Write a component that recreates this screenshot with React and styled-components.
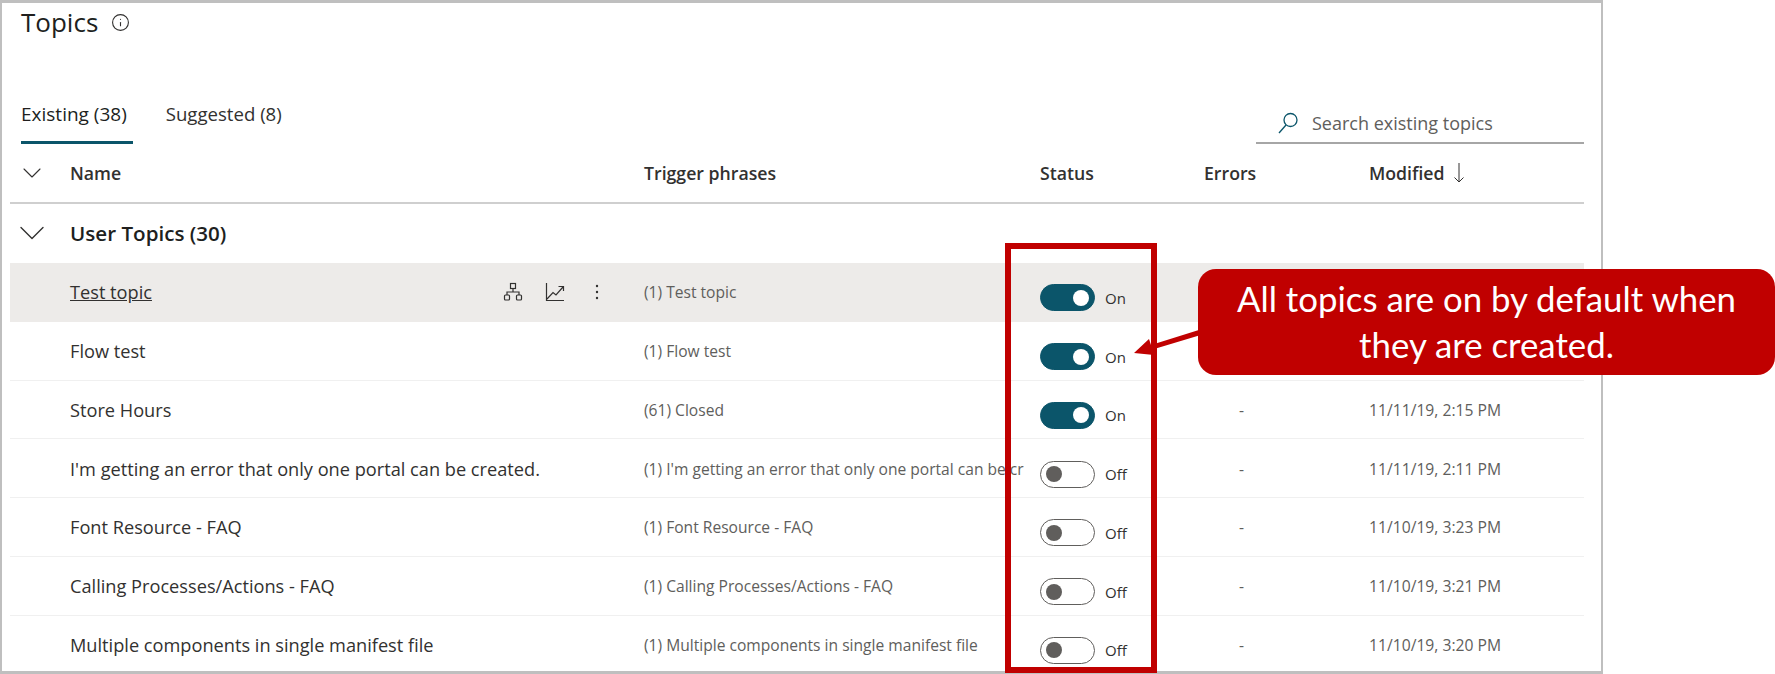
import React from "react";
import styled, { createGlobalStyle } from "styled-components";
import { ChevronDown, Info } from "lucide-react";

const rows = [
  { name: "Test topic", phrase: "(1) Test topic", on: true, hovered: true },
  { name: "Flow test", phrase: "(1) Flow test", on: true },
  { name: "Store Hours", phrase: "(61) Closed", on: true, errors: "-", modified: "11/11/19, 2:15 PM" },
  {
    name: "I'm getting an error that only one portal can be created.",
    phrase: "(1) I'm getting an error that only one portal can be created.",
    on: false,
    errors: "-",
    modified: "11/11/19, 2:11 PM"
  },
  { name: "Font Resource - FAQ", phrase: "(1) Font Resource - FAQ", on: false, errors: "-", modified: "11/10/19, 3:23 PM" },
  {
    name: "Calling Processes/Actions - FAQ",
    phrase: "(1) Calling Processes/Actions - FAQ",
    on: false,
    errors: "-",
    modified: "11/10/19, 3:21 PM"
  },
  {
    name: "Multiple components in single manifest file",
    phrase: "(1) Multiple components in single manifest file",
    on: false,
    errors: "-",
    modified: "11/10/19, 3:20 PM"
  }
];

const App = () => (
  <Page>
    <GlobalStyle />
    <Frame>
      <TitleRow>
        <Title>Topics</Title>
        <Info size={19} strokeWidth={1.4} color="#323130" />
      </TitleRow>

      <Toolbar>
        <Tabs>
          <Tab active>Existing (38)</Tab>
          <Tab>Suggested (8)</Tab>
        </Tabs>
        <Search>
          <svg width="22" height="22" viewBox="0 0 22 22" fill="none" stroke="#0b556a" strokeWidth="1.3">
            <circle cx="13.5" cy="8" r="6.5" />
            <path d="M9 13 L2 21" />
          </svg>
          <SearchText>Search existing topics</SearchText>
        </Search>
      </Toolbar>

      <HeaderRow>
        <ExpandCell>
          <ChevronDown size={32} strokeWidth={0.8} color="#323130" />
        </ExpandCell>
        <div>Name</div>
        <div>Trigger phrases</div>
        <div>Status</div>
        <div>Errors</div>
        <ModifiedHead>
          Modified
          <svg width="12" height="22" viewBox="0 0 12 22" fill="none" stroke="#323130" strokeWidth="1">
            <path d="M6 1 V20 M1.5 15.5 L6 20 L10.5 15.5" />
          </svg>
        </ModifiedHead>
      </HeaderRow>

      <GroupRow>
        <ExpandCell>
          <ChevronDown size={48} strokeWidth={0.75} color="#323130" />
        </ExpandCell>
        <div>User Topics (30)</div>
      </GroupRow>

      {rows.map((row) => (
        <Row key={row.name} $hovered={row.hovered}>
          <span />
          <NameCell>
            <NameText $hovered={row.hovered}>{row.name}</NameText>
            {row.hovered && (
              <RowActions>
                <svg width="20" height="20" viewBox="0 0 20 20" fill="none" stroke="#323130" strokeWidth="1.2">
                  <rect x="7.5" y="1.5" width="5" height="5" />
                  <rect x="1.5" y="13" width="5" height="5" rx="1" />
                  <rect x="13.5" y="13" width="5" height="5" rx="1" />
                  <path d="M10 6.5 V10 M4 13 V10 H16 V13" />
                </svg>
                <svg width="20" height="20" viewBox="0 0 20 20" fill="none" stroke="#323130" strokeWidth="1.2">
                  <path d="M1.5 1 V18.5 H19" />
                  <path d="M2 17 L8 10.5 L11 13 L18 5 M13.5 4.5 H18.5 V9" />
                </svg>
                <svg width="20" height="20" viewBox="0 0 20 20" fill="#323130">
                  <circle cx="10" cy="4" r="1.2" />
                  <circle cx="10" cy="10" r="1.2" />
                  <circle cx="10" cy="16" r="1.2" />
                </svg>
              </RowActions>
            )}
          </NameCell>
          <PhraseCell>{row.phrase}</PhraseCell>
          <StatusCell>
            <Toggle $on={row.on}>
              <Knob $on={row.on} />
            </Toggle>
            <ToggleLabel>{row.on ? "On" : "Off"}</ToggleLabel>
          </StatusCell>
          <MutedCell>{row.errors && <Dash>{row.errors}</Dash>}</MutedCell>
          <MutedCell>{row.modified}</MutedCell>
        </Row>
      ))}
    </Frame>

    <RedBox />
    <Pointer width="80" height="40" viewBox="0 0 80 40">
      <path d="M68 7 L17 23 L15 17 L0 31 L20 33 L18.5 27.5 L70 12 Z" fill="#c00000" />
    </Pointer>
    <Callout>All topics are on by default when they are created.</Callout>
  </Page>
);

const GlobalStyle = createGlobalStyle`
  html, body {
    margin: 0;
    background: #fff;
  }
`;

const Page = styled.div`
  position: relative;
  width: 1775px;
  height: 674px;
  overflow: hidden;
  font-family: "Open Sans", "Noto Sans", sans-serif;
  color: #323130;
`;

const Frame = styled.div`
  box-sizing: border-box;
  width: 1603px;
  height: 674px;
  padding: 0 17px 0 8px;
  border: solid #bfbfbf;
  border-width: 3px 2px;
  overflow: hidden;
`;

const TitleRow = styled.div`
  display: flex;
  align-items: center;
  gap: 13px;
  height: 38px;
  padding-left: 11px;
`;

const Title = styled.div`
  font-size: 26px;
  line-height: 38px;
  color: #201f1e;
`;

const Toolbar = styled.div`
  display: flex;
  justify-content: space-between;
  align-items: flex-end;
  height: 103px;
`;

const Tabs = styled.div`
  display: flex;
  gap: 33px;
  margin-left: 11px;
`;

const Tab = styled.div`
  box-sizing: border-box;
  height: 42px;
  padding-right: ${(p) => (p.active ? "6px" : "0")};
  font-size: ${(p) => (p.active ? "19px" : "18.6px")};
  line-height: 24px;
  color: ${(p) => (p.active ? "#201f1e" : "#323130")};
  border-bottom: 3px solid ${(p) => (p.active ? "#0b556a" : "transparent")};
`;

const Search = styled.div`
  box-sizing: border-box;
  display: flex;
  align-items: center;
  gap: 13px;
  width: 328px;
  height: 44px;
  padding: 4px 0 0 21px;
  border-bottom: 2px solid #a6a6a6;
`;

const SearchText = styled.div`
  font-size: 18px;
  color: #605e5c;
`;

const tableColumns = "60px 574px 396px 164px 165px 215px";

const HeaderRow = styled.div`
  display: grid;
  grid-template-columns: ${tableColumns};
  align-items: center;
  height: 60px;
  box-sizing: border-box;
  border-bottom: 2px solid #cfcfcf;
  font-size: 17.7px;
  font-weight: 600;
  padding-bottom: 1px;
`;

const ExpandCell = styled.div`
  display: flex;
  justify-content: center;
  padding-right: 16px;
`;

const ModifiedHead = styled.div`
  display: flex;
  align-items: center;
  gap: 8px;
`;

const GroupRow = styled.div`
  display: grid;
  grid-template-columns: 60px 1fr;
  align-items: center;
  height: 59px;
  padding-bottom: 1px;
  box-sizing: border-box;
  font-size: 20.6px;
  font-weight: 600;
  color: #201f1e;
`;

const Row = styled.div`
  box-sizing: border-box;
  display: grid;
  grid-template-columns: ${tableColumns};
  align-items: center;
  height: 58.75px;
  padding-top: 1px;
  background: ${(p) => (p.$hovered ? "#edebe9" : "transparent")};
  border-bottom: 1px solid ${(p) => (p.$hovered ? "#edebe9" : "#f0f0f0")};
`;

const NameCell = styled.div`
  display: flex;
  align-items: center;
  justify-content: space-between;
  padding-right: 37px;
`;

const NameText = styled.div`
  font-size: 18.2px;
  color: #323130;
  text-decoration: ${(p) => (p.$hovered ? "underline" : "none")};
`;

const RowActions = styled.div`
  display: flex;
  gap: 22px;
`;

const PhraseCell = styled.div`
  width: 380px;
  font-size: 15.6px;
  color: #605e5c;
  white-space: nowrap;
  overflow: hidden;
`;

const StatusCell = styled.div`
  display: flex;
  align-items: center;
  gap: 10px;
  margin-top: 11px;
`;

const Toggle = styled.div`
  box-sizing: border-box;
  display: flex;
  align-items: center;
  justify-content: ${(p) => (p.$on ? "flex-end" : "flex-start")};
  width: 55px;
  height: 27px;
  padding: 0 5px;
  border-radius: 14px;
  background: ${(p) => (p.$on ? "#0b556a" : "#fff")};
  border: 1px solid ${(p) => (p.$on ? "#0b556a" : "#605e5c")};
`;

const Knob = styled.div`
  width: 16px;
  height: 16px;
  border-radius: 50%;
  background: ${(p) => (p.$on ? "#fff" : "#605e5c")};
`;

const ToggleLabel = styled.div`
  font-size: 15px;
  color: #323130;
`;

const MutedCell = styled.div`
  font-size: 15.7px;
  color: #605e5c;
`;

const Dash = styled.span`
  margin-left: 35px;
`;

const RedBox = styled.div`
  position: absolute;
  box-sizing: border-box;
  left: 1005px;
  top: 243px;
  width: 152px;
  height: 430px;
  border: 6px solid #c00000;
`;

const Pointer = styled.svg`
  position: absolute;
  left: 1134px;
  top: 322px;
`;

const Callout = styled.div`
  position: absolute;
  box-sizing: border-box;
  left: 1198px;
  top: 269px;
  width: 577px;
  height: 106px;
  padding: 7px 30px 0;
  border-radius: 18px;
  background: #c00000;
  color: #fff;
  font-family: Lato, "Open Sans", sans-serif;
  font-size: 34.8px;
  line-height: 46px;
  text-align: center;
`;

export default App;
